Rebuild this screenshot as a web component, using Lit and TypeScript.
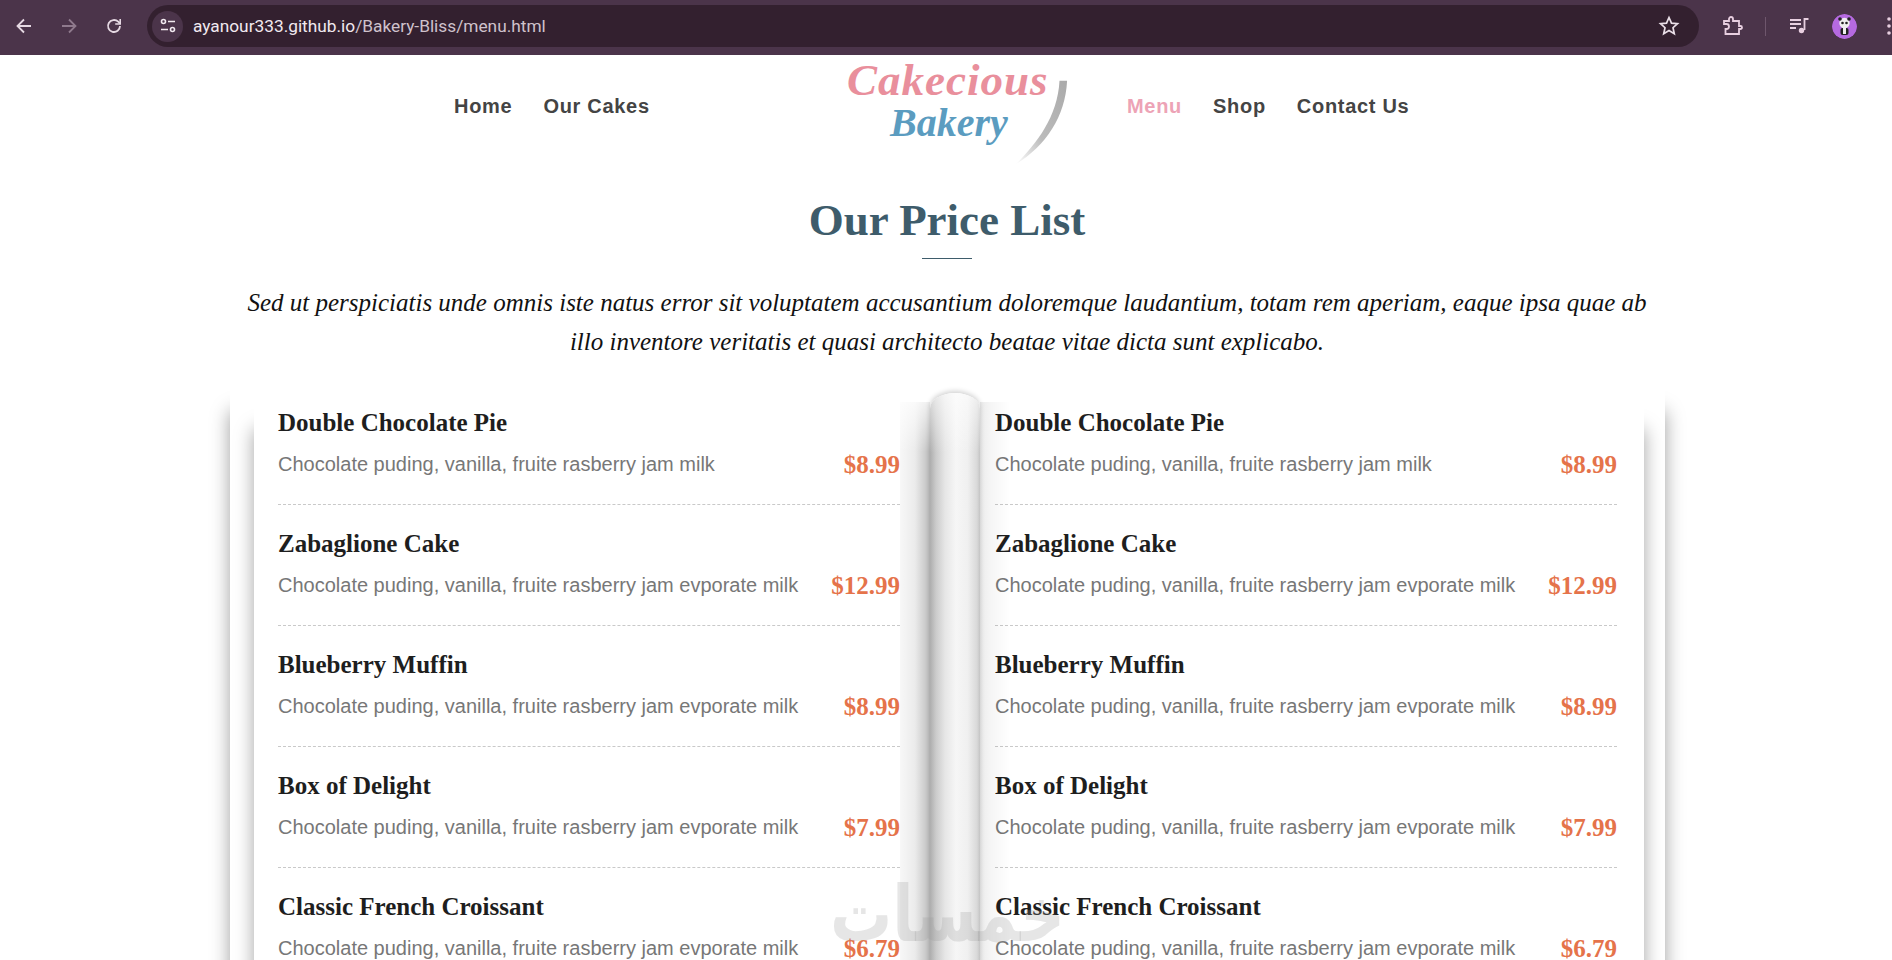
import { LitElement, html, css } from "lit";
import { customElement } from "lit/decorators.js";

const LEFT = [
  ["Double Chocolate Pie", "Chocolate puding, vanilla, fruite rasberry jam milk", "$8.99"],
  ["Zabaglione Cake", "Chocolate puding, vanilla, fruite rasberry jam evporate milk", "$12.99"],
  ["Blueberry Muffin", "Chocolate puding, vanilla, fruite rasberry jam evporate milk", "$8.99"],
  ["Box of Delight", "Chocolate puding, vanilla, fruite rasberry jam evporate milk", "$7.99"],
  ["Classic French Croissant", "Chocolate puding, vanilla, fruite rasberry jam evporate milk", "$6.79"],
];

@customElement("app-root")
export class AppRoot extends LitElement {
  static styles = css`
    :host { display: block; height: 960px; overflow: hidden; background: #fff; position: relative; font-family: "Liberation Sans", Arial, sans-serif; }
    .chrome { height: 55px; background: #4b344a; display: flex; align-items: center; padding: 0 0 3px 14px; box-sizing: border-box; overflow: hidden; }
    .navs { display: flex; gap: 25px; flex: none; }
    .nav-ic { width: 20px; height: 20px; display: block; flex: none; }
    .omni { margin-left: 23px; width: 1552px; height: 42px; border-radius: 21px; background: #33202f; display: flex; align-items: center; box-sizing: border-box; padding: 0 19px 0 5px; flex: none; }
    .tune { width: 31px; height: 31px; border-radius: 50%; background: #4b344a; display: flex; align-items: center; justify-content: center; flex: none; }
    .url { margin-left: 10px; font: 17.3px "Roboto", "Liberation Sans", sans-serif; color: #f1e9ef; flex: 1; white-space: nowrap; }
    .url span { color: #cfc2cc; }
    .tools { display: flex; align-items: center; flex: none; }
    .ext { margin-left: 22px; }
    .sep { width: 1px; height: 19px; background: #6e566c; margin: 0 23px 0 22px; }
    .avatar { width: 25px; height: 25px; border-radius: 50%; margin-left: 23px; display: block; }
    .dots { margin-left: 30px; }

    .header { height: 106px; display: flex; align-items: flex-start; padding-left: 454px; }
    .links { display: flex; gap: 31px; padding-top: 40px; font-size: 20px; font-weight: 700; letter-spacing: .7px; color: #444; white-space: nowrap; }
    .links.l { width: 386px; box-sizing: border-box; flex: none; }
    .links .active { color: #eda3b6; }
    .logo { width: 287px; height: 106px; flex: none; position: relative; }
    .cake, .bak { position: absolute; font-family: "Liberation Serif", serif; font-weight: 700; font-style: italic; white-space: nowrap; }
    .cake { left: 7px; top: 0; font-size: 45px; color: #e98f9c; letter-spacing: 1px; line-height: 50px; }
    .bak { left: 50px; top: 46px; font-size: 40px; color: #5b9cc0; line-height: 44px; }
    .swoosh { position: absolute; left: 172px; top: 23px; width: 57px; height: 87px; }

    .intro { padding-left: 2px; }
    h1 { margin: 0; text-align: center; font: 700 45px/62px "Liberation Serif", serif; color: #3e5c6b; padding-top: 28px; }
    .rule { width: 50px; height: 1px; background: #3e5c6b; margin: 7px auto 0; }
    .lead { margin: 25px auto 0; width: 1410px; text-align: center; font: italic 25px/38.5px "Liberation Serif", serif; color: #111; }

    .book { position: relative; margin: 26px 0 0 230px; width: 1435px; height: 600px; background: #fff; box-shadow: 0 24px 18px rgba(0,0,0,.38); }
    .page { position: absolute; left: 24px; top: 18px; width: 1390px; height: 600px; background: #fff; box-shadow: 0 24px 18px rgba(0,0,0,.36); }
    .cols { position: absolute; left: 24px; top: -21px; width: 1339px; display: flex; justify-content: space-between; }
    .col { width: 622px; }
    .item { height: 121px; box-sizing: border-box; border-bottom: 1px dashed #c9c9c9; padding-top: 21px; }
    .item:last-child { border-bottom: 0; }
    .name { font: 700 25px/36px "Liberation Serif", serif; color: #1e1e1e; white-space: nowrap; }
    .row { display: flex; justify-content: space-between; align-items: center; margin-top: 6px; height: 36px; }
    .desc { font-size: 20px; color: #777; white-space: nowrap; margin-bottom: 2px; }
    .price { font: 700 25px/36px "Liberation Serif", serif; color: #e5734a; }

    .fold { position: absolute; top: 15px; bottom: 0; width: 30px; }
    .fold.a { left: 670px; background: linear-gradient(to bottom, rgba(255,255,255,.75), rgba(255,255,255,0) 50px), linear-gradient(to right, rgba(0,0,0,.03), rgba(0,0,0,.08) 50%, rgba(0,0,0,.26)); }
    .fold.b { left: 750px; background: linear-gradient(to right, rgba(0,0,0,.08), rgba(0,0,0,.04) 35%, rgba(0,0,0,0)); }
    .spine { position: absolute; left: 700px; top: 6px; bottom: 0; width: 50px; border-radius: 26px 26px 0 0 / 16px 16px 0 0; background: linear-gradient(to bottom, rgba(255,255,255,.6), rgba(255,255,255,0) 60px), linear-gradient(to right, #adadad 0, #cbcbcb 12%, #e6e6e6 30%, #f6f6f6 52%, #f0f0f0 75%, #d9d9d9 94%, #c4c4c4 100%); box-shadow: 0 -2px 5px rgba(0,0,0,.18); }

    .wm { position: absolute; left: 830px; top: 870px; font: 700 62px/90px "DejaVu Sans", sans-serif; color: rgba(150,150,150,.24); white-space: nowrap; pointer-events: none; transform: scaleY(1.25); }
  `;

  private items() {
    return LEFT.map(([n, d, p]) => html`<div class="item"><div class="name">${n}</div><div class="row"><span class="desc">${d}</span><span class="price">${p}</span></div></div>`);
  }

  render() {
    return html`
      <div class="chrome">
        <div class="navs">
          <svg class="nav-ic" viewBox="0 0 20 20" fill="none" stroke="#e6d9e3" stroke-width="1.8"><path d="M17 10H4M10 3.5 3.5 10l6.5 6.5"/></svg>
          <svg class="nav-ic" viewBox="0 0 20 20" fill="none" stroke="#8f7a8d" stroke-width="1.8"><path d="M3 10h13M10 3.500l6.500 6.500-6.500 6.500"/></svg>
          <svg class="nav-ic" viewBox="0 0 20 20" fill="none" stroke="#e6d9e3" stroke-width="1.8"><path d="M16 10a6 6 0 1 1-1.800-4.300L16 7.500"/><path d="M16.200 3v5h-5" stroke-width="1.600"/></svg>
        </div>
        <div class="omni">
          <div class="tune"><svg width="18" height="16" viewBox="0 0 18 16" fill="none" stroke="#f1e9ef" stroke-width="1.600"><circle cx="4.500" cy="3.500" r="2"/><path d="M9 3.500h7M2 11.500h7"/><circle cx="13.500" cy="11.500" r="2"/></svg></div>
          <div class="url">ayanour333.github.io<span>/Bakery-Bliss/menu.html</span></div>
          <svg width="22" height="22" viewBox="0 0 22 22" fill="none" stroke="#eadfe8" stroke-width="1.700"><path d="M11 2.500l2.500 5.600 6 .6-4.500 4 1.300 6L11 15.600 5.700 18.700l1.300-6-4.500-4 6-.6z"/></svg>
        </div>
        <div class="tools">
          <svg class="ext" width="22" height="22" viewBox="0 0 22 22" fill="none" stroke="#e8cfe0" stroke-width="1.800"><path d="M3 6h5V4a2 2 0 0 1 4 0v2h6v5h1.500a1.500 1.500 0 0 1 0 3H18v5H4.500v-5h1a2.500 2.500 0 0 0 0-5H3z"/></svg>
          <div class="sep"></div>
          <svg width="20" height="20" viewBox="0 0 20 20" fill="none" stroke="#e8cfe0" stroke-width="1.800"><path d="M1 4h11M1 8h11M1 12h6"/><path d="M15.500 14V3h4"/><circle cx="12.500" cy="14.500" r="2.700" fill="#e8cfe0" stroke="none"/></svg>
          <svg class="avatar" viewBox="0 0 25 25"><circle cx="12.500" cy="12.500" r="12.500" fill="#b56ae0"/><circle cx="12.500" cy="9" r="5.200" fill="#eee"/><circle cx="8" cy="5" r="1.800" fill="#222"/><circle cx="17" cy="5" r="1.800" fill="#222"/><circle cx="10.500" cy="9" r="1.300" fill="#222"/><circle cx="14.500" cy="9" r="1.300" fill="#222"/><rect x="8.500" y="14" width="8" height="7" rx="2" fill="#222"/><rect x="11" y="14" width="3" height="6" fill="#eee"/></svg>
          <svg class="dots" width="4" height="18" viewBox="0 0 4 18" fill="#e8cfe0"><circle cx="2" cy="2" r="1.800"/><circle cx="2" cy="9" r="1.800"/><circle cx="2" cy="16" r="1.800"/></svg>
        </div>
      </div>

      <div class="header">
        <div class="links l"><span>Home</span><span>Our Cakes</span></div>
        <div class="logo">
          <span class="cake">Cakecious</span>
          <span class="bak">Bakery</span>
          <svg class="swoosh" viewBox="0 0 60 90"><defs><linearGradient id="sw" x1="1" y1="0" x2="0" y2="1"><stop offset="0" stop-color="#aaa"/><stop offset=".6" stop-color="#bbb"/><stop offset="1" stop-color="#fff"/></linearGradient></defs><path d="M50 2h8C56 40 36 70 4 90 26 68 48 40 50 2z" fill="url(#sw)"/></svg>
        </div>
        <div class="links"><span class="active">Menu</span><span>Shop</span><span>Contact Us</span></div>
      </div>

      <div class="intro">
        <h1>Our Price List</h1>
        <div class="rule"></div>
        <div class="lead">Sed ut perspiciatis unde omnis iste natus error sit voluptatem accusantium doloremque laudantium, totam rem aperiam, eaque ipsa quae ab illo inventore veritatis et quasi architecto beatae vitae dicta sunt explicabo.</div>
      </div>

      <div class="book">
        <div class="page">
          <div class="cols">
            <div class="col">${this.items()}</div>
            <div class="col">${this.items()}</div>
          </div>
        </div>
        <div class="fold a"></div>
        <div class="fold b"></div>
        <div class="spine"></div>
      </div>
      <div class="wm" dir="rtl">خمسات</div>
    `;
  }
}
